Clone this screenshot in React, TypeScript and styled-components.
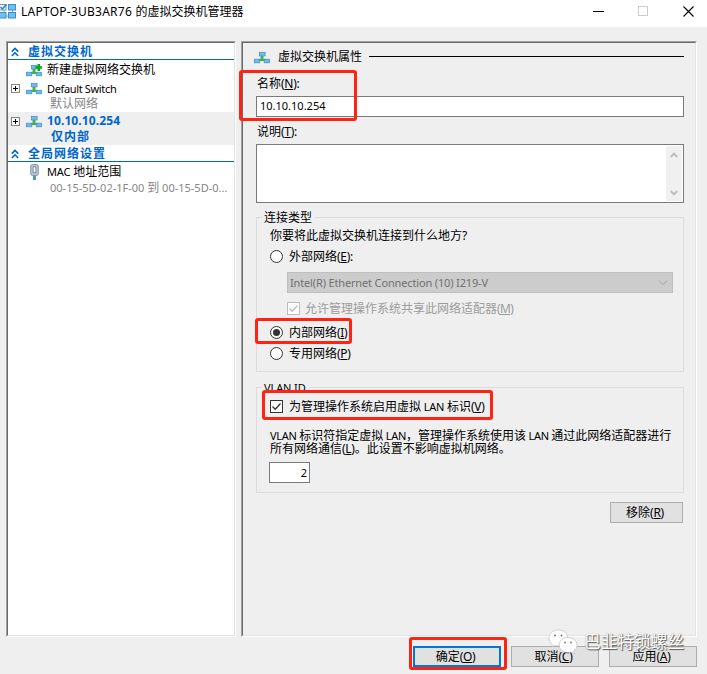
import React from "react";
import styled, { createGlobalStyle, css } from "styled-components";

const Global = createGlobalStyle`
  * { box-sizing: border-box; }
  body { margin: 0; background: #efefef; overflow: hidden; }
`;

const Window = styled.div`
  position: relative;
  width: 707px;
  height: 674px;
  background: #efefef;
  font: 12px/16px "Noto Sans", "Noto Sans CJK SC", sans-serif;
  color: #000;
  white-space: nowrap;
  overflow: hidden;
`;

const TitleBar = styled.header`
  display: flex;
  align-items: center;
  height: 27px;
  padding: 0 13px 4px 0;
  background: #fff;
`;
const Title = styled.h1`
  flex: 1;
  margin: 0 0 0 4px;
  font: inherit;
`;
const Controls = styled.div`
  display: flex;
  gap: 34px;
  svg { display: block; }
`;

const Columns = styled.div`
  display: flex;
  gap: 5px;
  padding: 14px 10px 0 6px;
`;
const Sunken = styled.section`
  height: 596px;
  border: 1px solid;
  border-color: #a0a0a0 #fff #fff #a0a0a0;
`;
const SunkenInner = styled.div<{ $white?: boolean }>`
  height: 100%;
  border: 1px solid;
  border-color: #696969 #e3e3e3 #e3e3e3 #696969;
  background: ${(p) => (p.$white ? "#fff" : "#efefef")};
`;
const TreePanel = styled(Sunken)`width: 230px;`;
const DetailPanel = styled(Sunken)`width: 456px;`;

const Lat = styled.span<{ $s?: number; $size?: number }>`
  letter-spacing: ${(p) => p.$s ?? 0}px;
  font-size: ${(p) => p.$size ?? 11}px;
`;

const Section = styled.div`
  display: flex;
  align-items: center;
  height: 17px;
  padding: 1px 0 0 3px;
  gap: 9px;
  border-bottom: 1px solid #0066cc;
  color: #0066cc;
  font-weight: 700;
  letter-spacing: 1px;
`;
const Item = styled.div<{ $h: number }>`
  display: flex;
  align-items: center;
  height: ${(p) => p.$h}px;
  padding: 1px 0 0 3px;
`;
const ToggleSlot = styled.span`
  display: flex;
  width: 15px;
`;
const IconSlot = styled.span<{ $in?: number }>`
  display: flex;
  width: 21px;
  padding-left: ${(p) => p.$in ?? 0}px;
`;
const SubText = styled.div<{ $h: number }>`
  height: ${(p) => p.$h}px;
  padding-left: 42px;
  line-height: 13px;
  color: #868686;
`;
const Selected = styled.div`
  height: 33px;
  background: #efefef;
  color: #0066cc;
  font-weight: 700;
  ${SubText} { color: #0066cc; padding-left: 43px; letter-spacing: 1px; line-height: 15px; }
`;
const Spaced = styled.span`margin-left: 3px;`;

const Details = styled.div`
  display: flex;
  flex-direction: column;
  padding: 0 11px 0 13px;
`;
const DetailHead = styled.div`
  display: flex;
  align-items: center;
  height: 28px;
  margin-left: -2px;
  &::after { content: ""; flex: 1; height: 1px; margin: 0 0 1px 7px; background: #000; }
`;
const HeadText = styled.span`margin-left: 8px;`;
const FieldLabel = styled.label<{ $h: number; $pad: number }>`
  height: ${(p) => p.$h}px;
  padding: ${(p) => p.$pad}px 0 0 1px;
`;
const field = css`
  border: 1px solid #7a7a7a;
  background: #fff;
`;
const NameField = styled.div`
  ${field}
  height: 21px;
  padding-left: 3px;
  line-height: 18px;
`;
const Memo = styled.div`
  ${field}
  display: flex;
  justify-content: flex-end;
  height: 59px;
  padding: 1px;
`;
const Scroll = styled.div`
  display: flex;
  flex-direction: column;
  align-items: center;
  justify-content: space-between;
  width: 16px;
  padding: 6px 0 5px;
  background: #f0f0f0;
`;

const Group = styled.fieldset<{ $h: number; $mt: number }>`
  position: relative;
  min-width: 0;
  height: ${(p) => p.$h}px;
  margin: ${(p) => p.$mt}px 0 0;
  padding: 10px 10px 0 13px;
  border: 1px solid #dcdcdc;
`;
const Legend = styled.div`
  position: absolute;
  left: 5px;
  top: -8px;
  padding: 0 3px 0 2px;
  height: 16px;
  line-height: 15px;
  background: #efefef;
`;
const Line = styled.div<{ $h: number; $indent?: number; $dim?: boolean; $gap?: number }>`
  display: flex;
  align-items: center;
  gap: ${(p) => p.$gap ?? 6}px;
  height: ${(p) => p.$h}px;
  margin-left: ${(p) => p.$indent ?? 0}px;
  color: ${(p) => (p.$dim ? "#9c9c9c" : "#000")};
  svg { flex: none; }
`;
const Combo = styled.div`
  display: flex;
  align-items: center;
  justify-content: space-between;
  width: 386px;
  height: 21px;
  margin: 3px 0 5px 17px;
  padding: 0 4px 0 2px;
  border: 1px solid #bfbfbf;
  background: #ccc;
  color: #707070;
`;
const Para = styled.p`
  margin: 14px 0 0;
  line-height: 13px;
`;
const VlanField = styled.div`
  ${field}
  width: 41px;
  height: 21px;
  margin: 7px 0 0 -1px;
  padding-right: 2px;
  text-align: right;
  line-height: 19px;
`;

const Button = styled.button<{ $w: number; $main?: boolean }>`
  width: ${(p) => p.$w}px;
  height: 21px;
  padding: 0 3px 0 0;
  border: ${(p) => (p.$main ? "2px solid #0078d7" : "1px solid #adadad")};
  background: #e1e1e1;
  color: #000;
  font: inherit;
  line-height: 17px;
  text-align: center;
`;
const RemoveButton = styled(Button)`
  align-self: flex-end;
  margin: 9px 1px 0 0;
  line-height: 19px;
`;
const Footer = styled.footer`
  display: flex;
  justify-content: flex-end;
  gap: 10px;
  padding: 9px 10px 0 0;
`;

const Mark = styled.div<{ $x: number; $y: number; $w: number; $h: number }>`
  position: absolute;
  left: ${(p) => p.$x}px;
  top: ${(p) => p.$y}px;
  width: ${(p) => p.$w}px;
  height: ${(p) => p.$h}px;
  border: 3px solid #ff2314;
  border-radius: 3px;
`;
const Watermark = styled.div`
  position: absolute;
  left: 548px;
  top: 627px;
  display: flex;
  align-items: center;
  gap: 5px;
  height: 30px;
  color: #fff;
  font-size: 16.7px;
  text-shadow: 1px 1px 1px #555, 0 0 1px #888;
`;

const Switch = ({ plus }: { plus?: boolean }) => (
  <svg width="16" height="13" viewBox="0 0 16 13">
    <path d="M6.500 5h3v3h2.500v2H4V8h2.500z" fill="#4fae3c" />
    <rect x="5.300" y="1.300" width="5.800" height="3.600" fill="#6bbcf0" stroke="#3f8dc6" strokeWidth=".7" />
    <rect x=".4" y="8.200" width="5.400" height="3.600" fill="#6bbcf0" stroke="#3f8dc6" strokeWidth=".7" />
    <rect x="10.200" y="8.200" width="5.400" height="3.600" fill="#6bbcf0" stroke="#3f8dc6" strokeWidth=".7" />
    {plus && <path d="M11.500 0h2.600v2.200H16v2.600h-1.900V7h-2.600V4.800H9.300V2.200h2.200z" fill="#12a51a" />}
  </svg>
);
const Expander = () => (
  <svg width="9" height="9" viewBox="0 0 9 9" shapeRendering="crispEdges">
    <rect x=".5" y=".5" width="8" height="8" fill="#fff" stroke="#848484" />
    <path d="M2 4.500h5M4.500 2v5" stroke="#000" />
  </svg>
);
const Chevrons = () => (
  <svg width="8" height="10" viewBox="0 0 8 10" fill="none" stroke="#0066cc" strokeWidth="1.600">
    <path d="M.8 4.600 4 1.400l3.200 3.200M.8 9 4 5.800 7.200 9" />
  </svg>
);
const Nic = () => (
  <svg width="9" height="16" viewBox="0 0 9 16">
    <rect x=".8" y=".7" width="7.400" height="10.600" rx="1.500" fill="#c9d6e0" stroke="#6f8799" />
    <rect x="3.100" y="2.800" width="2.800" height="6" fill="#fff" stroke="#627a8d" strokeWidth=".9" />
    <rect x="3" y="11.500" width="3" height="4.500" fill="#4a9cc8" />
  </svg>
);
const AppIcon = () => (
  <svg width="17" height="15" viewBox="0 0 17 15">
    <path d="M4 6v4M12.500 6v4M6 12h4" stroke="#8ba4b5" />
    <rect x="-1" y=".5" width="7" height="5.500" fill="#eef5fa" stroke="#8297a5" />
    <path d="M.5 3 2.400 5 6.500.4" stroke="#1688d8" strokeWidth="1.500" fill="none" />
    <rect x="8.500" y=".5" width="7" height="5.500" fill="#6cc2f4" stroke="#3c8fc4" />
    <rect x="-1" y="8.500" width="7" height="5.500" fill="#6cc2f4" stroke="#3c8fc4" />
    <rect x="8.500" y="8.500" width="7" height="5.500" fill="#6cc2f4" stroke="#3c8fc4" />
  </svg>
);
const Radio = ({ on }: { on?: boolean }) => (
  <svg width="13" height="13" viewBox="0 0 13 13">
    <circle cx="6.500" cy="6.500" r="6" fill="#fff" stroke="#333" />
    {on && <circle cx="6.500" cy="6.500" r="3.500" fill="#333" />}
  </svg>
);
const Check = ({ color }: { color: string }) => (
  <svg width="13" height="13" viewBox="0 0 13 13">
    <rect x=".5" y=".5" width="12" height="12" fill="#fff" stroke={color} />
    <path d="m2.500 6.500 2.700 2.800 5.300-5.800" fill="none" stroke={color} strokeWidth="1.300" />
  </svg>
);
const Arrow = ({ down }: { down?: boolean }) => (
  <svg width="8" height="6" viewBox="0 0 8 6" fill="none" stroke="#bfbfbf" strokeWidth="2">
    <path d={down ? "M.7 1 4 4.300 7.300 1" : "M.7 5 4 1.700 7.300 5"} />
  </svg>
);
const WeChat = () => (
  <svg width="31" height="28" viewBox="0 0 31 28">
    <g fill="#fff" stroke="#b5b5b5" strokeWidth=".6">
      <path d="M10.500 2C5 2 1 5.500 1 10c0 2.600 1.300 4.700 3.300 6.100L3.500 19l3.400-1.600c1.100.3 2.300.4 3.600.4 5.500 0 9-3.500 9-7.900S16 2 10.500 2z" />
      <path d="M20 9.500c-5.200 0-8.800 3.300-8.800 7.500s3.700 7.500 8.800 7.500c1.100 0 2.100-.2 3-.5l3.600 1.700-.9-2.900c2-1.400 3.300-3.400 3.300-5.800 0-4.200-4-7.500-9-7.500z" />
    </g>
    <g fill="#777">
      <circle cx="7" cy="7.500" r="1" /><circle cx="13.500" cy="7.500" r="1" />
      <circle cx="17" cy="14.500" r=".9" /><circle cx="23" cy="14.500" r=".9" />
    </g>
  </svg>
);

const Key = ({ k }: { k: string }) => <Lat $size={12} $s={-0.3}>(<u>{k}</u>)</Lat>;

export default function App() {
  return (
    <Window>
      <Global />
      <TitleBar>
        <AppIcon />
        <Title><Lat $size={12} $s={0.25}>LAPTOP-3UB3AR76 </Lat>的虚拟交换机管理器</Title>
        <Controls>
          <svg width="11" height="11"><path d="M0 5.500h11" stroke="#000" /></svg>
          <svg width="11" height="11"><rect x=".5" y=".5" width="9" height="9" fill="none" stroke="#ccc" /></svg>
          <svg width="11" height="11"><path d="m.5.5 10 10m0-10-10 10" stroke="#000" strokeWidth="1.100" /></svg>
        </Controls>
      </TitleBar>

      <Columns>
        <TreePanel>
          <SunkenInner $white>
            <Section><Chevrons />虚拟交换机</Section>
            <Item $h={19}><ToggleSlot /><IconSlot><Switch plus /></IconSlot>新建虚拟网络交换机</Item>
            <Item $h={18}><ToggleSlot><Expander /></ToggleSlot><IconSlot><Switch /></IconSlot><Lat $s={-0.35}>Default Switch</Lat></Item>
            <SubText $h={15}>默认网络</SubText>
            <Selected>
              <Item $h={17}><ToggleSlot><Expander /></ToggleSlot><IconSlot><Switch /></IconSlot><Lat $size={12} $s={0.1}>10.10.10.254</Lat></Item>
              <SubText $h={16}>仅内部</SubText>
            </Selected>
            <Section><Chevrons />全局网络设置</Section>
            <Item $h={19}><ToggleSlot /><IconSlot $in={4}><Nic /></IconSlot><Lat $s={-0.2}>MAC</Lat><Spaced>地址范围</Spaced></Item>
            <SubText $h={16}><Lat>00-15-5D-02-1F-00 </Lat>到<Lat> 00-15-5D-0...</Lat></SubText>
          </SunkenInner>
        </TreePanel>

        <DetailPanel>
          <SunkenInner>
            <Details>
              <DetailHead><Switch /><HeadText>虚拟交换机属性</HeadText></DetailHead>
              <FieldLabel $h={25} $pad={5}>名称<Key k="N" />:</FieldLabel>
              <NameField><Lat>10.10.10.254</Lat></NameField>
              <FieldLabel $h={27} $pad={7}>说明<Key k="T" />:</FieldLabel>
              <Memo><Scroll><Arrow /><Arrow down /></Scroll></Memo>

              <Group $h={155} $mt={14}>
                <Legend>连接类型</Legend>
                <Line $h={16}>你要将此虚拟交换机连接到什么地方?</Line>
                <Line $h={25}><Radio /><span>外部网络<Key k="E" />:</span></Line>
                <Combo>
                  <Lat $s={-0.15}>Intel(R) Ethernet Connection (10) I219-V</Lat>
                  <svg width="10" height="6" fill="none" stroke="#a0a0a0"><path d="m1 .7 4 4 4-4" /></svg>
                </Combo>
                <Line $h={21} $indent={17} $dim $gap={5}><Check color="#bcbcbc" /><span>允许管理操作系统共享此网络适配器<Lat $size={12} $s={-0.6}>(<u>M</u>)</Lat></span></Line>
                <Line $h={27}><Radio on /><span>内部网络<Key k="I" /></span></Line>
                <Line $h={15}><Radio /><span>专用网络<Key k="P" /></span></Line>
              </Group>

              <Group $h={106} $mt={15}>
                <Legend><Lat $s={-0.1}>VLAN ID</Lat></Legend>
                <Line $h={17}><Check color="#333" /><span>为管理操作系统启用虚拟<Lat $s={-0.2}> LAN </Lat>标识<Key k="V" /></span></Line>
                <Para>
                  <Lat $s={-0.3}>VLAN </Lat>标识符指定虚拟<Lat $s={-0.3}> LAN</Lat>，管理操作系统使用该<Lat $s={-0.3}> LAN </Lat>通过此网络适配器进行<br />
                  所有网络通信<Key k="L" />。此设置不影响虚拟机网络。
                </Para>
                <VlanField><Lat>2</Lat></VlanField>
              </Group>
              <RemoveButton $w={73}>移除<Key k="R" /></RemoveButton>
            </Details>
          </SunkenInner>
        </DetailPanel>
      </Columns>

      <Footer>
        <Button $w={88} $main>确定<Key k="O" /></Button>
        <Button $w={88}>取消<Key k="C" /></Button>
        <Button $w={88}>应用<Key k="A" /></Button>
      </Footer>

      <Mark $x={239} $y={70} $w={118} $h={51} />
      <Mark $x={255} $y={318} $w={97} $h={26} />
      <Mark $x={262} $y={390} $w={231} $h={30} />
      <Mark $x={409} $y={637} $w={98} $h={33} />
      <Watermark><WeChat />巴韭特锁螺丝</Watermark>
    </Window>
  );
}
